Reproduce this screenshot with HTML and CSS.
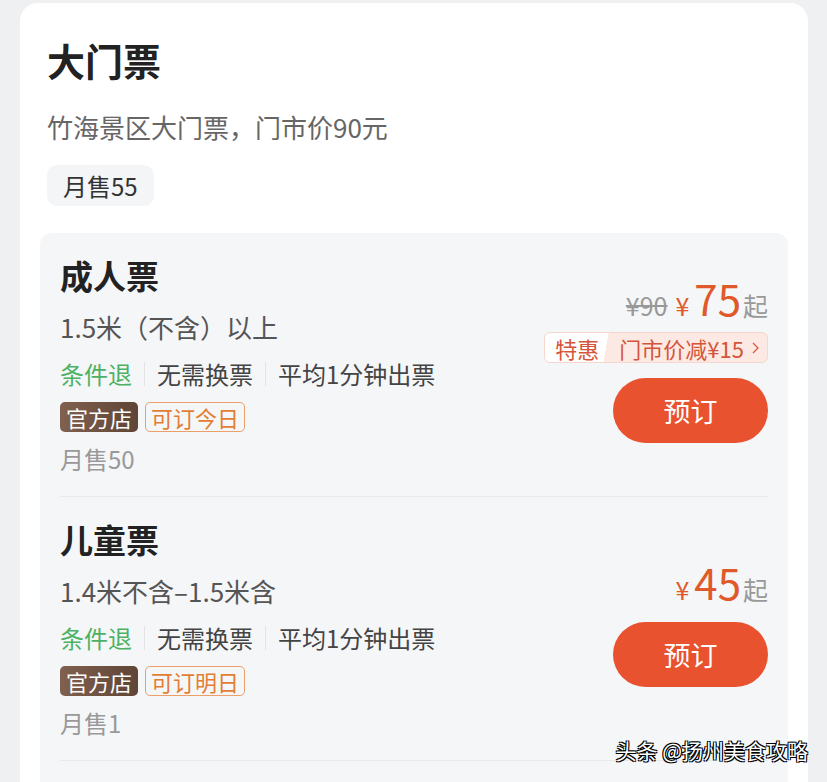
FILE: index.html
```html
<!DOCTYPE html>
<html lang="zh-CN">

<head>
    <meta charset="UTF-8">
    <meta name="viewport" content="width=device-width, initial-scale=1.0">
    <title>大门票</title>
    <link rel="stylesheet" href="styles.css">
</head>

<body>

    <div class="card">
        <h1 class="title">大门票</h1>
        <p class="subtitle">竹海景区大门票，门市价90元</p>
        <span class="sold-badge">月售55</span>

        <!-- 票种列表 -->
        <div class="ticket-list">
            <div class="ticket">
                <div class="ticket-info">
                    <h2 class="ticket-name">成人票</h2>
                    <p class="ticket-desc">1.5米（不含）以上</p>
                    <div class="ticket-tags">
                        <span class="tag tag-green">条件退</span>
                        <span class="tag">无需换票</span>
                        <span class="tag">平均1分钟出票</span>
                    </div>
                    <div class="ticket-badges">
                        <span class="badge-shop">官方店</span>
                        <span class="badge-date">可订今日</span>
                    </div>
                    <p class="ticket-sold">月售50</p>
                </div>
                <div class="ticket-buy">
                    <div class="price">
                        <s class="price-old">¥90</s>
                        <span class="price-sym">¥</span><span class="price-num">75</span><span class="price-suffix">起</span>
                    </div>
                    <div class="promo">
                        <span class="promo-label">特惠</span>
                        <span class="promo-text">门市价减¥15</span>
                        <svg class="promo-arrow" width="7" height="12" viewBox="0 0 7 12"><path d="M1 1l5 5-5 5" fill="none" stroke="#d4553a" stroke-width="1.2"/></svg>
                    </div>
                    <button class="btn-book">预订</button>
                </div>
            </div>

            <div class="ticket">
                <div class="ticket-info">
                    <h2 class="ticket-name">儿童票</h2>
                    <p class="ticket-desc">1.4米不含–1.5米含</p>
                    <div class="ticket-tags">
                        <span class="tag tag-green">条件退</span>
                        <span class="tag">无需换票</span>
                        <span class="tag">平均1分钟出票</span>
                    </div>
                    <div class="ticket-badges">
                        <span class="badge-shop">官方店</span>
                        <span class="badge-date">可订明日</span>
                    </div>
                    <p class="ticket-sold">月售1</p>
                </div>
                <div class="ticket-buy">
                    <div class="price">
                        <span class="price-sym">¥</span><span class="price-num">45</span><span class="price-suffix">起</span>
                    </div>
                    <button class="btn-book btn-book-near">预订</button>
                </div>
            </div>
        </div>
    </div>

    <div class="watermark">头条 @扬州美食攻略</div>

</body>

</html>
```

FILE: styles.css
```css
body {
    margin: 0;
    background: #eff0f2;
    font-family: "Noto Sans CJK SC", "Noto Sans", sans-serif;
    color: #222;
    overflow: hidden;
}

.card {
    margin: 3px 19px 0 20px;
    padding: 33px 20px 0;
    background: #fff;
    border-radius: 18px;
}

.title {
    margin: 0 0 0 7px;
    font-size: 38px;
    line-height: 48px;
    font-weight: 700;
}

.subtitle {
    margin: 25px 0 0 7px;
    font-size: 26px;
    line-height: 36px;
    color: #666;
}

.sold-badge {
    display: block;
    width: fit-content;
    margin: 20px 0 0 7px;
    padding: 0 16px;
    font-size: 24px;
    line-height: 41px;
    background: #f4f5f7;
    border-radius: 10px;
    color: #333;
}

.ticket-list {
    margin-top: 27px;
    padding: 0 20px 40px;
    background: #f5f6f8;
    border-radius: 12px;
}

.ticket {
    display: flex;
    align-items: center;
    justify-content: space-between;
    padding: 22px 0 20px;
    border-bottom: 1px solid #e8e9eb;
}

.ticket-name {
    margin: 0;
    font-size: 33px;
    line-height: 40px;
    font-weight: 700;
}

.ticket-desc {
    margin: 14px 0 0;
    font-size: 26px;
    line-height: 36px;
    color: #555;
}

.ticket-tags {
    display: flex;
    align-items: center;
    margin-top: 11px;
    font-size: 24px;
    line-height: 36px;
    color: #444;
}

.tag + .tag {
    margin-left: 12px;
    padding-left: 12px;
    border-left: 1px solid #e2e3e5;
    line-height: 24px;
}

.tag-green {
    color: #4cb263;
}

.ticket-badges {
    display: flex;
    gap: 7px;
    margin-top: 10px;
}

.badge-shop {
    padding: 0 6px;
    font-size: 22px;
    line-height: 30px;
    color: #fff;
    background: linear-gradient(90deg, #80604e, #5f4537);
    border-radius: 5px;
}

.badge-date {
    padding: 0 5px;
    font-size: 22px;
    line-height: 28px;
    color: #e37d33;
    border: 1px solid #eba06b;
    border-radius: 5px;
}

.ticket-sold {
    margin: 10px 0 0;
    font-size: 24px;
    line-height: 34px;
    color: #999;
}

.ticket-buy {
    display: flex;
    flex-direction: column;
    align-items: flex-end;
    margin-bottom: 10px;
}

.price {
    display: flex;
    align-items: baseline;
    line-height: 40px;
}

.price-old {
    margin-right: 8px;
    font-size: 25px;
    color: #999;
}

.price-sym {
    margin-right: 5px;
    font-size: 25px;
    color: #e0592b;
}

.price-num {
    font-size: 42px;
    color: #e0592b;
}

.price-suffix {
    margin-left: 2px;
    font-size: 25px;
    color: #999;
}

.promo {
    display: flex;
    align-items: center;
    margin-top: 7px;
    height: 29px;
    padding-right: 8px;
    border: 1px solid #f6d6cd;
    border-radius: 6px;
    font-size: 22px;
    color: #d4553a;
    background: linear-gradient(100deg, #fff 0 28%, #fde9e3 28%);
}

.promo-label {
    padding: 0 20px 0 10px;
}

.promo-text {
    margin-right: 8px;
}

.btn-book {
    margin-top: 15px;
    width: 155px;
    height: 65px;
    border: 0;
    border-radius: 33px;
    background: #e9522f;
    color: #fff;
    font-family: inherit;
    font-size: 27px;
}

.btn-book-near {
    margin-top: 13px;
}

.watermark {
    position: absolute;
    right: 19px;
    top: 734px;
    font-size: 21px;
    line-height: 32px;
    color: #fff;
    text-shadow: 1px 1px 0 #000, -1px -1px 0 #000, 1px -1px 0 #000, -1px 1px 0 #000;
}
```
